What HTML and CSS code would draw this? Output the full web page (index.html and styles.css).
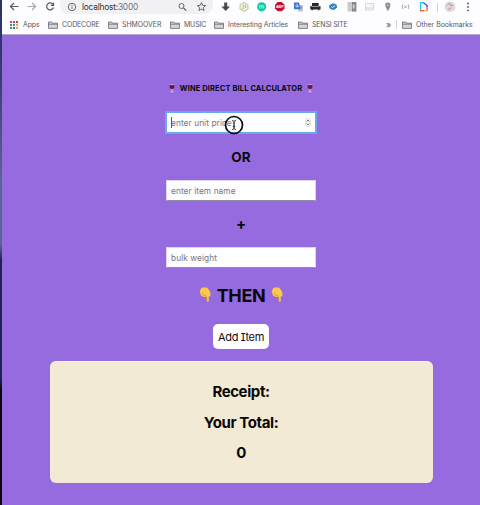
FILE: index.html
```html
<!DOCTYPE html>
<html lang="en">
<head>
<meta charset="utf-8">
<title>Wine Direct Bill Calculator</title>
<link rel="stylesheet" href="styles.css">
</head>
<body>
<svg class="defs" aria-hidden="true">
  <symbol id="folder" viewBox="0 0 10 8"><path d="M.5 7V1h3.2l1 1.2h4.8V7.4h-9zM.5 3.2h9" fill="#d4d4d7" stroke="#6b6b70" stroke-width=".8"/></symbol>
  <symbol id="wine" viewBox="0 0 6 9"><path d="M.5.7h5l-.3 2.800Q4.800 5 3 5T.8 3.500z" fill="#67152d"/><path d="M.5.7h5" stroke="#d9c1d5" stroke-width=".7"/><path d="M3 5v2.400M1.300 7.800h3.400" stroke="#dccbea" stroke-width=".9"/></symbol>
  <symbol id="hand" viewBox="0 0 12 16"><path d="M3 .6h4.800q1.700.9 3.600 5v3q-.6 1.300-1.700.7v5.200q-.9 1.500-2 0V9.600Q6.600 10.600 5.800 9.800 4.600 10.600 3.800 9.400 2 9.400 1.600 7.500 .9 6 1.100 3.500 1.500 1.400 3 .6z" fill="#fcc94a"/><path d="M2.500 7.500 4.500 6.200M3.900 9.200 5.500 7.500M5.800 9.600 6.800 8M7.700 9.600v4.500q.8 1.200 1.700.4" fill="none" stroke="#c88a29" stroke-width=".7"/></symbol>
</svg>
<div class="window">
  <header class="browser">
    <div class="toolbar">
      <svg class="nav" viewBox="0 0 18 14"><path d="M13.500 6.500h-8M9 3 5.400 6.500 9 10" class="line"/></svg>
      <svg class="nav faded" viewBox="0 0 18 14"><path d="M4.500 6.500h8M9 3l3.600 3.500L9 10" class="line"/></svg>
      <svg class="nav" viewBox="0 0 18 14"><path d="M12 4.300A3.500 3.500 0 1 0 12.500 7.500M12.500 2.800v2.600H9.900" class="line"/></svg>
      <div class="address">
        <svg class="info" viewBox="0 0 10 10"><circle cx="5" cy="5" r="3.700" class="line thin"/><path d="M5 4.400v2.700M5 2.700v.9" class="line thin"/></svg>
        <span class="url">localhost:<i>3000</i></span>
        <svg class="tool" viewBox="0 0 18 14"><circle cx="8" cy="6" r="2.500" class="line thin"/><path d="m10 8 2.700 2.700" class="line"/></svg>
        <svg class="tool" viewBox="0 0 18 14"><path d="m9 2.600 1.200 2.700 2.900.3-2.200 2 .6 2.900L9 9 6.500 10.500l.6-2.900-2.200-2 2.900-.3z" class="line thin"/></svg>
      </div>
      <div class="extensions">
        <svg viewBox="0 0 18 14"><path d="M7.200 2.500h3V6.500h2.800l-4.300 4.500-4.300-4.500h2.800z" fill="#48484c"/></svg>
        <svg viewBox="0 0 18 14"><path d="m9 2.400 4 2.300v4.400l-4 2.300-4-2.300V4.700z" fill="#f2f3df" stroke="#b9bd94" stroke-width=".9"/><path d="M8.300 4.600v4H7M11.300 5.300q-1.800-.5-1.800.5l1.700.7q.5 1.500-1.700 1.200" fill="none" stroke="#a8b16f" stroke-width=".7"/></svg>
        <svg viewBox="0 0 18 14"><circle cx="8.700" cy="6.800" r="4.600" fill="#12c9a5"/><path d="M6.700 8.500v-3M6.700 6q1.700-1 2 0v2.500M8.700 6q1.700-1 2 0v2.500" fill="none" stroke="#c8fff2" stroke-width=".8"/></svg>
        <svg viewBox="0 0 18 14"><path d="M6.700 2h4.100l2.700 2.800v3.800l-2.700 2.700H6.700L4 8.600V4.800z" fill="#c80e2d"/><text x="8.800" y="8.300" class="abp">ABP</text></svg>
        <svg viewBox="0 0 18 14"><path d="M8.500 5H14v6.400H9z" fill="#c5c8cc"/><path d="M5 2.500h5l1.800 6.700H5z" fill="#3978d5"/><path d="M9.100 5.200q-1.900-1.300-2.200.5t2.300.8V6H8" fill="none" stroke="#fff" stroke-width=".7"/><path d="M10.800 7h2.500m-.5 0-1.500 2.500" stroke="#6c7b8d" stroke-width=".6"/></svg>
        <svg viewBox="0 0 18 14"><path d="M5 3h6.700v3h1.800v3.500H3.300V6H5zM4.500 9h1.300v1.300H4.500zM11 9h1.300v1.300H11z" fill="#29292d"/><path d="M4.500 6.500h7.800" stroke="#fff" stroke-width=".5"/></svg>
        <svg viewBox="0 0 18 14"><path d="M4.500 5 8 3.300 11.500 4.500l.7 3L9 10 5.500 9.300 4 7z" fill="#367fb7"/><path d="m6.300 6.500 1.300 1 2.500-2" fill="none" stroke="#fff" stroke-width=".9"/></svg>
        <svg viewBox="0 0 18 14"><path d="M4.500 2h8.800v9.500H4.500z" fill="#cacacc"/><path d="M9 2h4.300v9.500H9z" fill="#89898c"/><path d="M9.800 4.500h1.700v4H9.800z" fill="#d4d4d5"/></svg>
        <svg viewBox="0 0 18 14"><path d="M4.500 3.500h8v6.500h-8zM4.500 8h8" fill="#f6f6f7" stroke="#d3d3d7" stroke-width=".9"/></svg>
        <svg viewBox="0 0 18 14"><path d="M8.800 2.500q2.700.1 2.700 2.600-.2 2.400-2.700 6.100Q6.300 7 6.100 5.100 6.100 2.600 8.800 2.500z" fill="#8b8b90"/><circle cx="8.800" cy="5.200" r=".9" fill="#c7c7ca"/></svg>
        <svg viewBox="0 0 18 14"><path d="M5.800 4.500q-1.300 2.500 0 4.500M11.200 4.500q1.300 2.500 0 4.500M7.300 5.500l2.400 2.500m0-2.500L7.300 8" fill="none" stroke="#97979c" stroke-width=".8"/></svg>
        <svg viewBox="0 0 18 14"><path d="M5.500 11V2.700h3.500" fill="none" stroke="#16d5e3" stroke-width="1.300"/><path d="M8.500 2.700 12.100 5.500V7" fill="none" stroke="#3b48d8" stroke-width="1.300"/><path d="M12.100 6.500v4.300" stroke="#f037b5" stroke-width="1.300"/><path d="M5 10.700h4" stroke="#ee4b45" stroke-width="1.300"/><path d="M8.700 10.700h3.900" stroke="#f5b03b" stroke-width="1.300"/></svg>
      </div>
      <span class="divider"></span>
      <svg class="avatar" viewBox="0 0 12 14"><circle cx="6" cy="6.800" r="5.300" fill="#ded8d8"/><path d="M3 5.500 5.500 3 7 6l2-1M4 9.500l3.500-1.700" fill="none" stroke="#b67e87" stroke-width=".8"/></svg>
      <svg class="dots" viewBox="0 0 6 14"><circle cx="3" cy="3.500" r=".9"/><circle cx="3" cy="6.900" r=".9"/><circle cx="3" cy="10.300" r=".9"/></svg>
    </div>
    <nav class="bookmarks">
      <svg class="apps" viewBox="0 0 8 8"><path d="M0 1h2m1 0h2" stroke="#d54741" stroke-width="2"/><path d="M6 1h2" stroke="#a94a48" stroke-width="2"/><path d="M0 4h2" stroke="#3c9983" stroke-width="2"/><path d="M3 4h2" stroke="#4a8bdb" stroke-width="2"/><path d="M6 4h2" stroke="#e0aa3e" stroke-width="2"/><path d="M0 7h2m1 0h2" stroke="#378d70" stroke-width="2"/><path d="M6 7h2" stroke="#dcaa43" stroke-width="2"/></svg>
      <span class="bm w-apps">Apps</span>
      <svg class="folder"><use href="#folder"/></svg><span class="bm w-code">CODECORE</span>
      <svg class="folder"><use href="#folder"/></svg><span class="bm w-shmoo">SHMOOVER</span>
      <svg class="folder"><use href="#folder"/></svg><span class="bm w-music">MUSIC</span>
      <svg class="folder"><use href="#folder"/></svg><span class="bm w-articles">Interesting Articles</span>
      <svg class="folder"><use href="#folder"/></svg><span class="bm w-sensi">SENSI SITE</span>
      <span class="more">»</span>
      <span class="divider small"></span>
      <svg class="folder"><use href="#folder"/></svg><span class="bm">Other Bookmarks</span>
    </nav>
  </header>
  <main class="page">
    <h1 class="title"><svg class="wine"><use href="#wine"/></svg><span>WINE DIRECT BILL CALCULATOR</span><svg class="wine"><use href="#wine"/></svg></h1>
    <div class="field focused">
      <input type="text" placeholder="enter unit price">
      <span class="caret"></span>
      <svg class="stepper" viewBox="0 0 6 9"><rect x=".4" y=".4" width="5.200" height="8.200" rx="2.300" fill="#f4f4f4" stroke="#ccc" stroke-width=".6"/><path d="m1.800 3.400 1.200-1.200 1.200 1.200M1.800 5.600 3 6.800l1.200-1.200" fill="none" stroke="#444" stroke-width=".9"/></svg>
      <svg class="cursor" viewBox="0 0 20 20"><circle cx="10" cy="10" r="8.500" fill="none" stroke="#080809" stroke-width="1.700"/><path d="M8 5.500q2 0 2 1.200v6.600q0 1.200-2 1.200M12 5.500q-2 0-2 1.200v6.600q0 1.200 2 1.200M8.800 11.500h2.400" fill="none" stroke="#333" stroke-width=".9"/></svg>
    </div>
    <h2 class="joiner">OR</h2>
    <div class="field"><input type="text" placeholder="enter item name"></div>
    <h2 class="joiner plus">+</h2>
    <div class="field"><input type="text" placeholder="bulk weight"></div>
    <h2 class="then"><svg class="hand"><use href="#hand"/></svg><span>THEN</span><svg class="hand"><use href="#hand"/></svg></h2>
    <button class="add" type="button">Add Item</button>
    <section class="receipt">
      <h3>Receipt:</h3>
      <h3>Your Total:</h3>
      <h3>0</h3>
    </section>
  </main>
</div>
</body>
</html>
```
FILE: styles.css
```css
* { box-sizing: border-box; }
body {
  margin: 0;
  height: 505px;
  overflow: hidden;
  padding-left: 2px;
  font-family: Inter, "Liberation Sans", sans-serif;
  background: linear-gradient(#273266 0, #33386f 60px, #59649a 180px, #59649a 245px, #202451 260px, #1c2356 380px, #080712 390px, #080712 100%);
}
svg { display: block; flex: none; }
.defs { position: absolute; width: 0; height: 0; }
.window { height: 505px; display: flex; flex-direction: column; background: #966bdf; }
.browser { height: 35px; flex: none; background: #fdfcfe; border-bottom: 1px solid #b8a9ca; }
.toolbar { height: 14px; display: flex; align-items: center; padding-left: 3px; }
.nav { width: 18px; height: 14px; }
.faded { opacity: .5; }
.line { fill: none; stroke: #57575c; stroke-width: 1.200; }
.thin { stroke-width: .9; }
.address { width: 153px; height: 14px; margin-left: 1px; padding: 0 2px 0 7px; display: flex; align-items: center; background: #f1f1f4; border-radius: 0 0 8px 8px; }
.info { width: 10px; height: 10px; }
.url { flex: 1; padding-left: 5px; font-size: 8.400px; line-height: 14px; letter-spacing: -.23px; color: #333338; white-space: nowrap; }
.url i { font-style: normal; color: #74747a; }
.tool { width: 19px; height: 14px; }
.extensions { display: flex; width: 216px; margin-left: 4px; }
.extensions svg { width: 18px; height: 14px; }
.abp { font: bold 3.700px "Liberation Sans", sans-serif; fill: #fff; text-anchor: middle; }
.divider { width: 1px; height: 9px; margin-left: 4px; background: #d3d3d8; }
.divider.small { margin: 0 5px 0 4px; }
.avatar { width: 12px; height: 14px; margin-left: 6px; }
.dots { width: 6px; height: 14px; margin-left: 9px; fill: #56565b; }
.bookmarks { height: 20px; display: flex; align-items: center; padding: 1px 0 0 8px; color: #58585d; }
.apps { width: 8px; height: 8px; margin-right: 5px; }
.folder { width: 10px; height: 8px; margin-right: 4px; }
.bm { font: 6.900px/12px Inter, sans-serif; white-space: nowrap; }
.w-apps { width: 25px; letter-spacing: -.1px; }
.w-code { width: 46px; letter-spacing: -.08px; }
.w-shmoo { width: 48px; }
.w-music { width: 30px; letter-spacing: -.1px; }
.w-articles { width: 70px; letter-spacing: -.05px; }
.w-sensi { width: 74px; letter-spacing: -.12px; }
.more { width: 6px; font-size: 9px; line-height: 12px; }
.page { display: flex; flex-direction: column; align-items: center; padding: 49px 0 0; color: #08080b; }
h1, h2, h3 { margin: 0; font-weight: 700; }
.title { height: 10px; display: flex; align-items: center; gap: 5px; font-size: 7.500px; line-height: 10px; letter-spacing: .12px; white-space: nowrap; }
.wine { width: 6px; height: 9px; margin-top: -1px; }
.field { position: relative; width: 150px; height: 21px; }
.field.focused { margin-top: 18px; margin-bottom: 1px; }
.field input { display: block; width: 100%; height: 100%; padding: 0 4px; border: 1px solid #ddd5e8; border-bottom-color: #918aa1; border-radius: 0; outline: 0; background: #fefdff; font: 8.300px Inter, sans-serif; letter-spacing: .08px; }
.field input::placeholder { color: #77777b; opacity: 1; }
.focused input { border-color: #68a9ee; box-shadow: 0 0 0 1px #68a9ee; }
.caret { position: absolute; left: 5px; top: 5px; width: 1px; height: 11px; background: #555; }
.stepper { position: absolute; right: 5px; top: 6px; width: 6px; height: 9px; }
.cursor { position: absolute; left: 58px; top: 3px; width: 20px; height: 20px; }
.joiner { height: 46px; font-size: 13.500px; line-height: 46px; }
.plus { font-size: 15px; }
.then { height: 56px; display: flex; align-items: center; gap: 6px; font-size: 18px; line-height: 56px; letter-spacing: -.4px; }
.hand { width: 12px; height: 16px; margin-top: -3px; }
.add { width: 56px; height: 25px; padding: 0; border: 0; border-radius: 5px; background: #fefdff; color: #111; font: 11px Inter, sans-serif; letter-spacing: -.35px; font-feature-settings: "cv08"; }
.receipt { width: 383px; height: 122px; margin-top: 12px; padding-top: 15px; border-radius: 6px; border-top: 1px solid #faf1ee; background: #f3ead5; text-align: center; }
.receipt h3 { height: 30.500px; font-size: 15px; line-height: 30.500px; letter-spacing: -.4px; }
```
